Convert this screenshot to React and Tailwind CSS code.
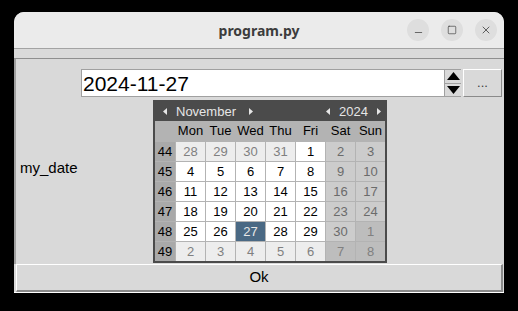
import { Minus, Square, X } from "lucide-react";

const FONT = { fontFamily: '"Liberation Sans", Arial, sans-serif' };

const DAY_NAMES = ["Mon", "Tue", "Wed", "Thu", "Fri", "Sat", "Sun"];

// [week, [[day, kind], ...]]  kind: n normal, o other month, s selected
const WEEKS = [
  [44, [[28, "o"], [29, "o"], [30, "o"], [31, "o"], [1, "n"], [2, "n"], [3, "n"]]],
  [45, [[4, "n"], [5, "n"], [6, "n"], [7, "n"], [8, "n"], [9, "n"], [10, "n"]]],
  [46, [[11, "n"], [12, "n"], [13, "n"], [14, "n"], [15, "n"], [16, "n"], [17, "n"]]],
  [47, [[18, "n"], [19, "n"], [20, "n"], [21, "n"], [22, "n"], [23, "n"], [24, "n"]]],
  [48, [[25, "n"], [26, "n"], [27, "s"], [28, "n"], [29, "n"], [30, "n"], [1, "o"]]],
  [49, [[2, "o"], [3, "o"], [4, "o"], [5, "o"], [6, "o"], [7, "o"], [8, "o"]]],
];

function dayClass(kind, weekend) {
  if (kind === "s") return "bg-[#4a6984] text-[#e8e8e8]";
  if (kind === "o") {
    return weekend
      ? "bg-[#bdbdbd] text-[#808080]"
      : "bg-[#ededed] text-[#808080]";
  }
  return weekend ? "bg-[#cccccc] text-[#6b6b6b]" : "bg-white text-black";
}

function Arrow({ dir }) {
  return (
    <svg width="5" height="7" viewBox="0 0 5 7" className="shrink-0">
      {dir === "left" ? (
        <polygon points="4,0 4,7 0,3.5" fill="#e6e6e6" />
      ) : (
        <polygon points="1,0 1,7 5,3.5" fill="#e6e6e6" />
      )}
    </svg>
  );
}

function Calendar() {
  return (
    <div
      className="absolute left-[139px] top-[88px] w-[234px] border-2 border-[#4b4b4b] bg-[#b3b3b3]"
      style={FONT}
    >
      <div className="h-[19px] bg-[#4b4b4b] flex items-center text-[13px] text-[#e6e6e6]">
        <div className="w-[20px] flex justify-center">
          <Arrow dir="left" />
        </div>
        <span className="ml-[1px]">November</span>
        <div className="ml-[12px]">
          <Arrow dir="right" />
        </div>
        <div className="flex-1" />
        <Arrow dir="left" />
        <span className="ml-[8px] mr-[8px]">2024</span>
        <div className="mr-[4px]">
          <Arrow dir="right" />
        </div>
      </div>
      <div className="grid grid-cols-[20px_repeat(7,29px)] grid-rows-[20px_repeat(6,19px)] gap-px text-[13px]">
        <div />
        {DAY_NAMES.map((d) => (
          <div key={d} className="flex items-center justify-center text-black">
            {d}
          </div>
        ))}
        {WEEKS.map(([wk, days]) => [
          <div
            key={"w" + wk}
            className="flex items-center justify-center bg-[#a9a9a9] text-black"
          >
            {wk}
          </div>,
          ...days.map(([d, kind], i) => (
            <div
              key={wk + "-" + i}
              className={
                "flex items-center justify-center " + dayClass(kind, i >= 5)
              }
            >
              {d}
            </div>
          )),
        ])}
      </div>
    </div>
  );
}

export default function App() {
  return (
    <div className="w-[518px] h-[311px] bg-black pt-[12px] pl-[14px] overflow-hidden">
      <div className="relative w-[490px] h-[281px] rounded-t-[10px] bg-[#d9d9d9] flex flex-col overflow-hidden">
        {/* title bar */}
        <div className="h-[36px] bg-[#ebebeb] flex items-center shrink-0">
          <div className="w-[97px]" />
          <div
            className="flex-1 text-center text-[14px] font-bold text-[#3c3c3c]"
            style={{ fontFamily: '"Noto Sans", sans-serif' }}
          >
            program.py
          </div>
          <div className="flex items-center gap-[12px] pr-[7px]">
            <div className="w-[22px] h-[22px] rounded-full bg-[#dedede] flex items-center justify-center">
              <Minus size={11} strokeWidth={1.6} className="text-[#3c3c3c] mt-[5px]" />
            </div>
            <div className="w-[22px] h-[22px] rounded-full bg-[#dedede] flex items-center justify-center">
              <Square size={10} strokeWidth={1.6} className="text-[#3c3c3c]" />
            </div>
            <div className="w-[22px] h-[22px] rounded-full bg-[#dedede] flex items-center justify-center">
              <X size={12} strokeWidth={1.6} className="text-[#3c3c3c]" />
            </div>
          </div>
        </div>

        {/* menu-ish strip */}
        <div className="h-[11px] shrink-0 border-t border-[#a3a3a3] bg-[#dadada] border-b border-b-[#8f8f8f]" />

        {/* content */}
        <div className="flex-1 flex border-l-2 border-l-[#a0a0a0]" style={FONT}>
          <div className="w-[65px] flex items-center pl-[4px] pt-[14px] text-[15px] text-black">
            my_date
          </div>
          <div className="flex-1 pt-[10px]">
            <div className="flex items-start">
              <div className="w-[364px] h-[28px] bg-white border border-[#a0a0a0] flex items-center pl-[1px] text-[21px] text-black leading-none">
                2024-11-27
              </div>
              <div className="w-[16px] h-[28px] flex flex-col bg-white border-y border-[#a0a0a0]">
                <div className="flex-1 flex items-center justify-center bg-[#d9d9d9] border-b border-[#a0a0a0]">
                  <svg width="13" height="8" viewBox="0 0 13 8">
                    <polygon points="0,8 13,8 6.5,0" fill="black" />
                  </svg>
                </div>
                <div className="flex-1 flex items-center justify-center bg-[#d9d9d9]">
                  <svg width="13" height="8" viewBox="0 0 13 8">
                    <polygon points="0,0 13,0 6.5,8" fill="black" />
                  </svg>
                </div>
              </div>
              <div className="ml-[2px] w-[39px] h-[28px] bg-[#d9d9d9] border border-t-white border-l-white border-b-[#8a8a8a] border-r-[#8a8a8a] flex items-center justify-center text-[13px] text-[#3c3c3c]">
                ...
              </div>
            </div>
          </div>
        </div>

        {/* Ok button */}
        <div
          className="h-[28px] shrink-0 ml-[2px] mr-[1px] bg-[#d9d9d9] border border-t-white border-l-white border-b-2 border-b-[#8a8a8a] border-r-2 border-r-[#8a8a8a] flex items-center justify-center text-[15px] text-black"
          style={FONT}
        >
          Ok
        </div>
        <div className="h-[1px] bg-white shrink-0" />

        <Calendar />
      </div>
    </div>
  );
}
